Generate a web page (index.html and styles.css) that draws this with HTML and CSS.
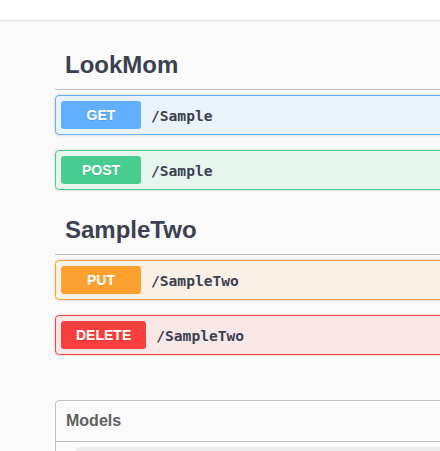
FILE: index.html
```html
<!DOCTYPE html>
<html>
<head>
<meta charset="utf-8">
<link rel="stylesheet" href="styles.css">
</head>
<body>
<div class="topbar"></div>
<main class="wrapper">
  <section class="tag-section">
    <h3 class="opblock-tag"><span>LookMom</span></h3>
    <div class="opblock get">
      <span class="method">GET</span><span class="path">/Sample</span>
    </div>
    <div class="opblock post">
      <span class="method">POST</span><span class="path">/Sample</span>
    </div>
  </section>
  <section class="tag-section">
    <h3 class="opblock-tag"><span>SampleTwo</span></h3>
    <div class="opblock put">
      <span class="method">PUT</span><span class="path">/SampleTwo</span>
    </div>
    <div class="opblock delete">
      <span class="method">DELETE</span><span class="path">/SampleTwo</span>
    </div>
  </section>
  <section class="models">
    <h4 class="models-title"><span>Models</span></h4>
    <div class="model-container"></div>
  </section>
</main>
</body>
</html>
```

FILE: styles.css
```css
* { box-sizing: border-box; }
html, body {
  margin: 0;
  padding: 0;
  background: #fafafa;
  overflow: hidden;
  height: 451px;
}
body {
  font-family: "Liberation Sans", Arial, sans-serif;
  color: #3b4151;
}
.topbar {
  height: 20px;
  background: #fff;
  box-shadow: 0 1px 2px rgba(0, 0, 0, 0.12);
  position: relative;
  z-index: 1;
}
.wrapper {
  padding: 20px 0 0 55px;
  width: 600px;
}
.tag-section {
  display: flex;
  flex-direction: column;
}
.opblock-tag {
  display: flex;
  align-items: center;
  margin: 0 0 5px;
  padding: 11px 20px 10px 10px;
  height: 50px;
  border-bottom: 1px solid rgba(59, 65, 81, 0.3);
  font-size: 24px;
  font-weight: 700;
  color: #3b4151;
}
.opblock {
  display: flex;
  align-items: center;
  height: 40px;
  padding: 5px;
  margin: 0 0 15px;
  border: 1px solid #000;
  border-radius: 4px;
  box-shadow: 0 0 3px rgba(0, 0, 0, 0.19);
}
.method {
  min-width: 80px;
  padding: 6px 15px;
  border-radius: 3px;
  color: #fff;
  font-size: 14px;
  line-height: 16px;
  font-weight: 700;
  text-align: center;
  text-shadow: 0 1px 0 rgba(0, 0, 0, 0.1);
}
.path {
  padding: 0 10px;
  font-family: "DejaVu Sans Mono", "Liberation Mono", monospace;
  font-size: 14.6px;
  font-weight: 700;
  color: #3b4151;
}
.get { background: rgba(97, 175, 254, 0.1); border-color: #61affe; }
.get .method { background: #61affe; }
.post { background: rgba(73, 204, 144, 0.1); border-color: #49cc90; }
.post .method { background: #49cc90; }
.put { background: rgba(252, 161, 48, 0.1); border-color: #fca130; }
.put .method { background: #fca130; }
.delete { background: rgba(249, 62, 62, 0.1); border-color: #f93e3e; }
.delete .method { background: #f93e3e; }
.models {
  margin: 30px 0;
  border: 1px solid rgba(59, 65, 81, 0.3);
  border-radius: 4px;
  padding: 0 0 20px;
}
.models-title {
  display: flex;
  align-items: center;
  height: 41px;
  margin: 0 0 5px;
  padding: 10px 20px 10px 10px;
  border-bottom: 1px solid rgba(59, 65, 81, 0.3);
  font-size: 16px;
  font-weight: 700;
  color: #606060;
}
.model-container {
  margin: 0 20px 15px;
  height: 40px;
  background: rgba(0, 0, 0, 0.05);
  border-radius: 4px;
}
```
